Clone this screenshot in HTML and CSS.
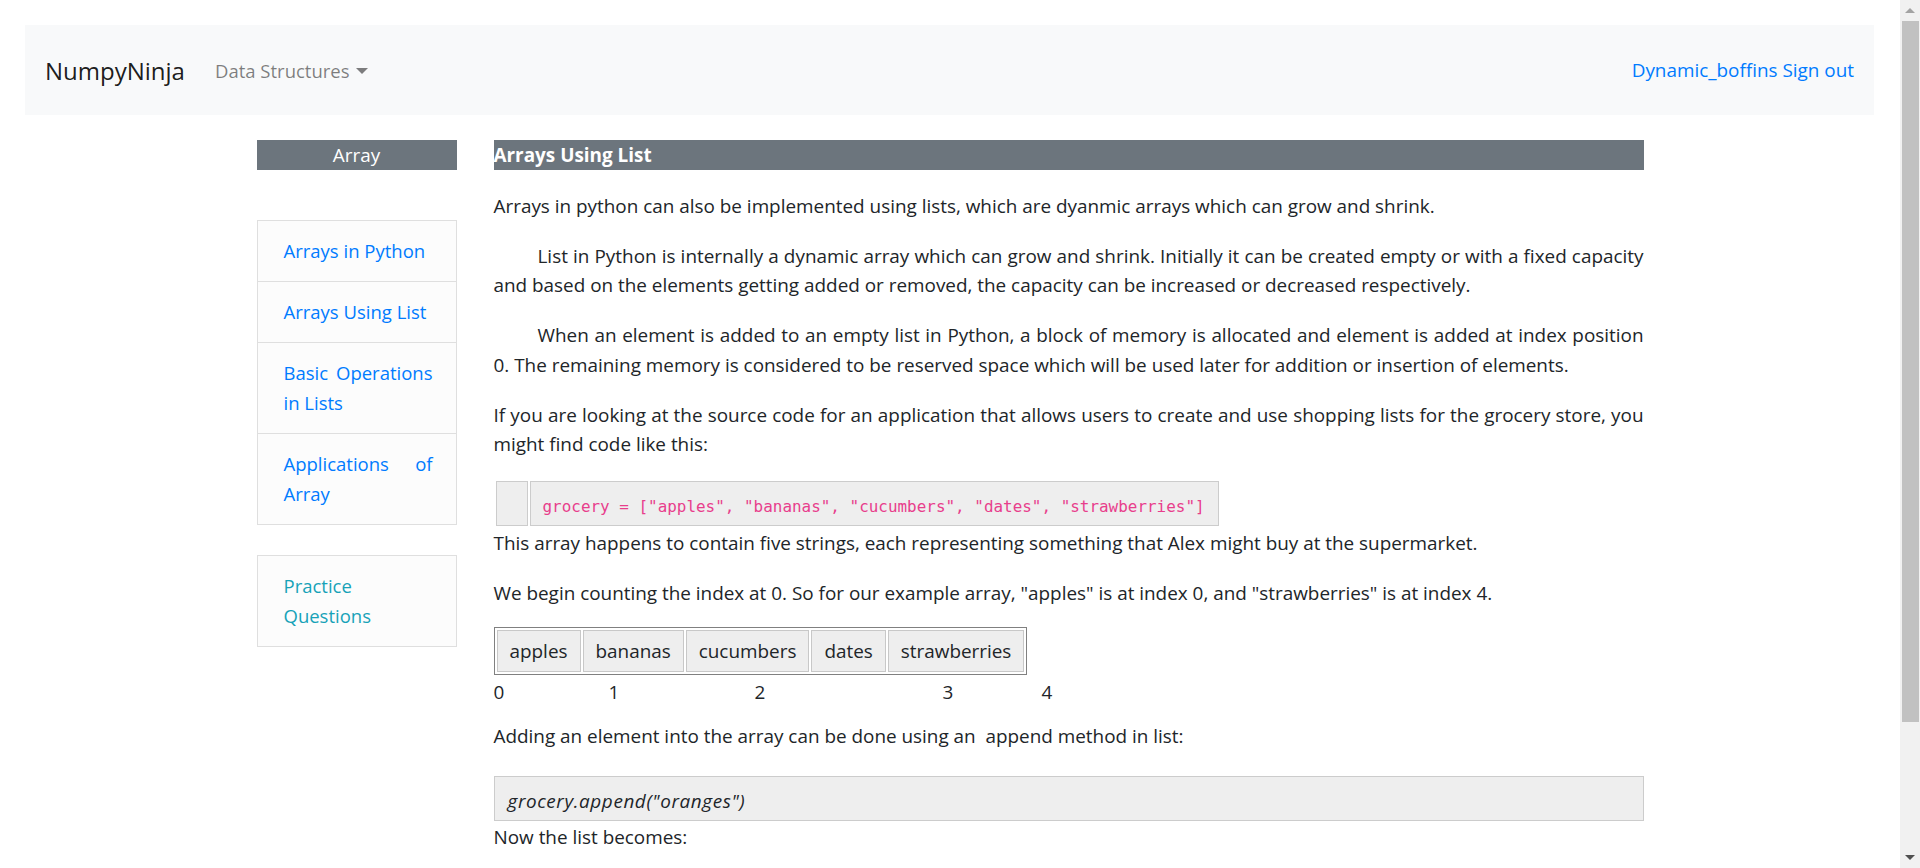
FILE: index.html
```html
<!DOCTYPE html>
<html lang="en">
<head>
<meta charset="utf-8">
<title>Arrays Using List</title>
<link rel="stylesheet" href="styles.css">
</head>
<body>
<div class="page">
  <nav class="navbar">
    <a class="brand" href="#">NumpyNinja</a>
    <div class="nav-dropdown">Data Structures<span class="caret"></span></div>
    <div class="nav-right"><a href="#">Dynamic_boffins</a> <a href="#">Sign out</a></div>
  </nav>
  <div class="container">
    <aside class="sidebar">
      <div class="side-title">Array</div>
      <div class="list-group">
        <a class="list-item" href="#">Arrays in Python</a>
        <a class="list-item" href="#">Arrays Using List</a>
        <a class="list-item" href="#">Basic Operations in Lists</a>
        <a class="list-item" href="#">Applications of Array</a>
      </div>
      <div class="list-group practice">
        <a class="list-item" href="#">Practice Questions</a>
      </div>
    </aside>
    <main class="content">
      <div class="topic">Arrays Using List</div>
      <p>Arrays in python can also be implemented using lists, which are dyanmic arrays which can grow and shrink.</p>
      <p class="indent">List in Python is internally a dynamic array which can grow and shrink. Initially it can be created empty or with a fixed capacity and based on the elements getting added or removed, the capacity can be increased or decreased respectively.</p>
      <p class="indent">When an element is added to an empty list in Python, a block of memory is allocated and element is added at index position 0. The remaining memory is considered to be reserved space which will be used later for addition or insertion of elements.</p>
      <p>If you are looking at the source code for an application that allows users to create and use shopping lists for the grocery store, you might find code like this:</p>
      <table class="code-table">
        <tr>
          <td class="gutter"></td>
          <td class="code"><code>grocery = ["apples", "bananas", "cucumbers", "dates", "strawberries"]</code></td>
        </tr>
      </table>
      <p>This array happens to contain five strings, each representing something that Alex might buy at the supermarket.</p>
      <p>We begin counting the index at 0. So for our example array, "apples" is at index 0, and "strawberries" is at index 4.</p>
      <table class="array-table">
        <tr>
          <td>apples</td>
          <td>bananas</td>
          <td>cucumbers</td>
          <td>dates</td>
          <td>strawberries</td>
        </tr>
      </table>
      <div class="indices"><span>0</span><span>1</span><span>2</span><span>3</span><span>4</span></div>
      <p>Adding an element into the array can be done using an&nbsp; append method in list:</p>
      <div class="snippet">grocery.append("oranges")</div>
      <p>Now the list becomes:</p>
    </main>
  </div>
</div>
<div class="scrollbar">
  <div class="sb-btn sb-up"></div>
  <div class="sb-thumb"></div>
  <div class="sb-fill"></div>
  <div class="sb-btn sb-down"></div>
</div>
</body>
</html>
```
FILE: styles.css
```css
html, body {
  height: 100%;
  overflow: hidden;
}

body {
  margin: 0;
  font-family: "Open Sans", "Noto Sans", sans-serif;
  font-size: 18.9px;
  color: #212529;
  background: #fff;
}

.page {
  margin-right: 20px;
}

/* navbar */
.navbar {
  margin: 25px 26px 0 25px;
  height: 90px;
  padding: 0 20px;
  box-sizing: border-box;
  background: #f8f9fa;
  display: flex;
  align-items: center;
}

.brand {
  font-size: 24px;
  color: rgba(0, 0, 0, 0.9);
  text-decoration: none;
}

.nav-dropdown {
  margin-left: 30px;
  font-size: 18.5px;
  color: rgba(0, 0, 0, 0.5);
  display: flex;
  align-items: center;
}

.caret {
  display: inline-block;
  margin-left: 6px;
  margin-top: 1px;
  border-top: 6px solid rgba(0, 0, 0, 0.5);
  border-left: 6px solid transparent;
  border-right: 6px solid transparent;
}

.nav-right {
  margin-left: auto;
}

.nav-right a {
  color: #007bff;
  text-decoration: none;
}

/* layout */
.container {
  width: 1387px;
  margin: 25px auto 0;
  display: flex;
  gap: 37px;
  align-items: flex-start;
}

.sidebar {
  width: 200px;
  flex: none;
}

.side-title {
  background: #6c757d;
  color: #fff;
  text-align: center;
  height: 30px;
  line-height: 30px;
}

.list-group {
  margin-top: 50px;
  border: 1px solid #dfdfdf;
  background: #fcfcfc;
  display: flex;
  flex-direction: column;
}

.list-item {
  display: block;
  padding: 15px 23px 15px 26px;
  font-size: 18.5px;
  line-height: 30px;
  color: #007bff;
  text-decoration: none;
  text-align: justify;
  border-top: 1px solid #dfdfdf;
}

.list-item:first-child {
  border-top: 0;
}

.practice {
  margin-top: 30px;
}

.practice .list-item {
  color: #17a2b8;
}

/* content */
.content {
  flex: 1;
  min-width: 0;
}

.topic {
  background: #6c757d;
  color: #fff;
  font-weight: 700;
  height: 30px;
  line-height: 30px;
  margin-bottom: 22px;
}

p {
  margin: 0 0 20.6px;
  line-height: 29.4px;
  text-align: justify;
}

p.indent {
  text-indent: 44px;
}

.code-table {
  border-spacing: 2px;
  margin: -1px 0 1px;
}

.gutter {
  width: 30px;
  padding: 0;
  background: #eee;
  border: 1px solid #ccc;
}

.code {
  background: #eee;
  border: 1px solid #ccc;
  padding: 9.3px 13px 4.3px 12px;
  font-family: "DejaVu Sans Mono", "Liberation Mono", monospace;
  font-size: 15.95px;
  line-height: 29.4px;
  color: #e83e8c;
  white-space: pre;
}

.code code {
  font-family: inherit;
}

.array-table {
  border: 1px solid #808080;
  border-spacing: 2px;
  margin-top: -2px;
}

.array-table td {
  background: #eee;
  border: 1px solid #c8c8c8;
  padding: 5px 12px;
  line-height: 30px;
}

.indices {
  display: grid;
  grid-template-columns: 115px 146px 188px 99px auto;
  margin: 3px 0 14.6px;
  line-height: 29.4px;
}

.snippet {
  margin: 24.3px 0 2.3px;
  background: #eee;
  border: 1px solid #ccc;
  padding: 10.3px 13px 3.3px;
  font-style: italic;
  letter-spacing: 0.6px;
  line-height: 29.4px;
}

/* fake classic scrollbar */
.scrollbar {
  position: fixed;
  top: 0;
  right: 0;
  width: 20px;
  height: 100%;
  background: #f1f1f1;
  display: flex;
  flex-direction: column;
  align-items: center;
}

.sb-btn {
  width: 100%;
  height: 21px;
  flex: none;
  display: flex;
  align-items: center;
  justify-content: center;
}

.sb-up::before {
  content: "";
  border-left: 5px solid transparent;
  border-right: 5px solid transparent;
  border-bottom: 5px solid #a3a3a3;
}

.sb-down::before {
  content: "";
  border-left: 5px solid transparent;
  border-right: 5px solid transparent;
  border-top: 5px solid #505050;
}

.sb-thumb {
  width: 17px;
  height: 701px;
  flex: none;
  background: #c1c1c1;
}

.sb-fill {
  flex: 1;
}
```
